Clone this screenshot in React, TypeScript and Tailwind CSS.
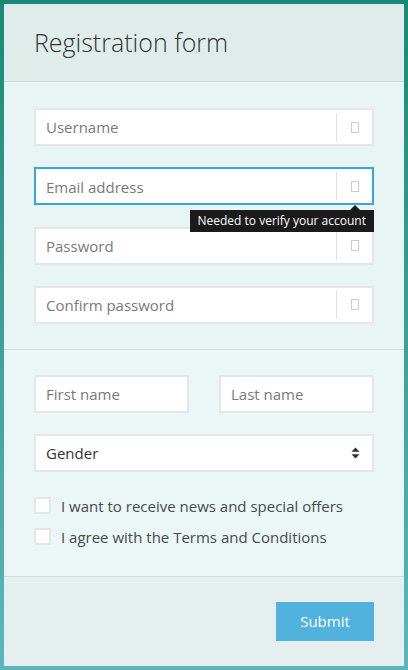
import React from 'react';

const Tofu: React.FC = () => (
    <svg width="8" height="11" viewBox="0 0 8 11" className="block">
        <rect x="0.5" y="0.5" width="7" height="10" fill="none" stroke="#c9ccd8" strokeWidth="1" />
    </svg>
);

interface FieldProps {
    placeholder: string;
    focused?: boolean;
    tooltip?: string;
}

const IconField: React.FC<FieldProps> = ({ placeholder, focused, tooltip }) => (
    <div className="relative">
        <div
            className={`flex h-[38px] items-stretch bg-white border-2 ${focused ? 'border-[#37a6da]' : 'border-[#e5e6e6]'}`}
        >
            <div className="flex-1 flex items-center pl-[10px] pt-[1px] text-[15px] text-[#7a7a7a]">{placeholder}</div>
            <div className="flex items-center py-[3px]">
                <div className="h-full w-px bg-[#e1e1e1]" />
            </div>
            <div className="w-[35px] flex items-center justify-center">
                <Tofu />
            </div>
        </div>
        {tooltip && (
            <div className="absolute right-0 top-[43px] z-10">
                <div className="absolute -top-[5px] right-[14px] w-0 h-0 border-l-[5px] border-r-[5px] border-b-[5px] border-l-transparent border-r-transparent border-b-[#1b1b1b]" />
                <div className="bg-[#1b1b1b] text-white text-[12px] leading-[22px] px-[8px] whitespace-nowrap">{tooltip}</div>
            </div>
        )}
    </div>
);

const PlainField: React.FC<{ placeholder: string }> = ({ placeholder }) => (
    <div className="flex h-[38px] items-center bg-white border-2 border-[#e5e6e6] pl-[10px] pt-[1px] text-[15px] text-[#7a7a7a]">
        {placeholder}
    </div>
);

const Check: React.FC<{ label: string }> = ({ label }) => (
    <label className="flex items-center gap-[10px] text-[15px] leading-[22px] text-[#4a4a4a]">
        <span className="w-[17px] h-[17px] bg-white border-2 border-[#e5e6e6]" />
        {label}
    </label>
);

const App: React.FC = () => {
    return (
        <div
            className="w-[408px] h-[670px] p-[4px] bg-gradient-to-b from-[#178a76] to-[#5ab8bc]"
            style={{ fontFamily: '"Open Sans", "Liberation Sans", sans-serif' }}
        >
            <div className="h-[662px] flex flex-col bg-[#e8f4f4]">
                {/* Header */}
                <div className="h-[78px] flex items-center px-[30px] bg-[#e0ecea] border-b border-[#cfdcdb]">
                    <h1 className="text-[25px] font-light text-[#333] leading-none">Registration form</h1>
                </div>

                {/* Account fields */}
                <div className="px-[30px] pt-[26px] pb-[25px] flex flex-col gap-[21.3px] border-b border-[#d3e0e0] bg-[#e9f5f5]">
                    <IconField placeholder="Username" />
                    <IconField placeholder="Email address" focused tooltip="Needed to verify your account" />
                    <IconField placeholder="Password" />
                    <IconField placeholder="Confirm password" />
                </div>

                {/* Personal fields */}
                <div className="px-[30px] pt-[25px] pb-[28px] flex flex-col bg-[#ebf6f6]">
                    <div className="grid grid-cols-2 gap-[30px]">
                        <PlainField placeholder="First name" />
                        <PlainField placeholder="Last name" />
                    </div>
                    <div className="mt-[21px] flex h-[38px] items-center justify-between bg-white border-2 border-[#e5e6e6] pl-[10px] pr-[12px] pt-[1px] text-[15px] text-[#333]">
                        <span>Gender</span>
                        <svg width="9" height="12" viewBox="0 0 9 12">
                            <path d="M4.5 0.5 L8.5 4.8 L0.5 4.8 Z" fill="#333" />
                            <path d="M4.5 11.5 L8.5 7.2 L0.5 7.2 Z" fill="#333" />
                        </svg>
                    </div>
                    <div className="mt-[23px] flex flex-col gap-[9px]">
                        <Check label="I want to receive news and special offers" />
                        <Check label="I agree with the Terms and Conditions" />
                    </div>
                </div>

                {/* Footer */}
                <div className="flex-1 flex items-start justify-end px-[30px] pt-[25px] bg-[#e6eff0] border-t border-[#d3dcdd]">
                    <button className="w-[98px] h-[39px] bg-[#52b2de] text-white text-[15px]">Submit</button>
                </div>
            </div>
        </div>
    );
};

export default App;
